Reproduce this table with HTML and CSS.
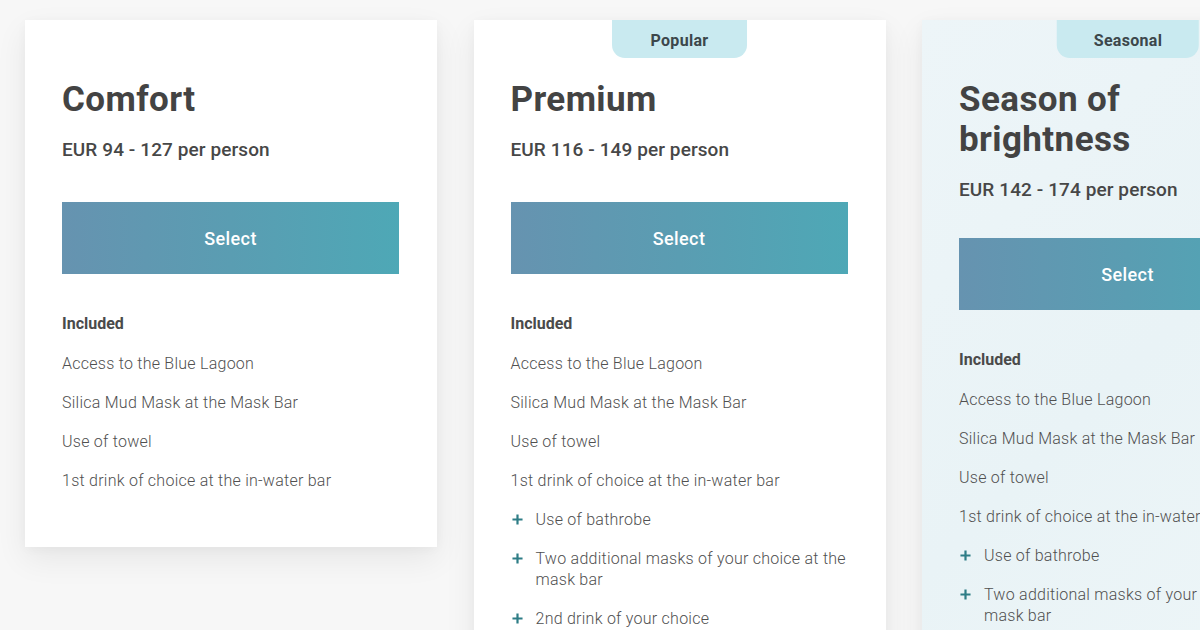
FILE: index.html
```html
<!DOCTYPE html>
<html lang="en">
<head>
<meta charset="utf-8">
<title>Packages</title>
<link rel="stylesheet" href="styles.css">
</head>
<body>
<div class="cards">
  <div class="card">
    <h2 class="title">Comfort</h2>
    <p class="price">EUR 94 - 127 per person</p>
    <button class="select">Select</button>
    <h3 class="inc">Included</h3>
    <ul class="list">
      <li>Access to the Blue Lagoon</li>
      <li>Silica Mud Mask at the Mask Bar</li>
      <li>Use of towel</li>
      <li>1st drink of choice at the in-water bar</li>
    </ul>
  </div>
  <div class="card">
    <div class="badge">Popular</div>
    <h2 class="title">Premium</h2>
    <p class="price">EUR 116 - 149 per person</p>
    <button class="select">Select</button>
    <h3 class="inc">Included</h3>
    <ul class="list">
      <li>Access to the Blue Lagoon</li>
      <li>Silica Mud Mask at the Mask Bar</li>
      <li>Use of towel</li>
      <li>1st drink of choice at the in-water bar</li>
      <li class="plus"><svg viewBox="0 0 12 12"><path d="M6 0.5v11M0.5 6h11"/></svg><span>Use of bathrobe</span></li>
      <li class="plus"><svg viewBox="0 0 12 12"><path d="M6 0.5v11M0.5 6h11"/></svg><span>Two additional masks of your choice at the mask bar</span></li>
      <li class="plus"><svg viewBox="0 0 12 12"><path d="M6 0.5v11M0.5 6h11"/></svg><span>2nd drink of your choice</span></li>
    </ul>
  </div>
  <div class="card seasonal">
    <div class="badge">Seasonal</div>
    <h2 class="title">Season of brightness</h2>
    <p class="price">EUR 142 - 174 per person</p>
    <button class="select">Select</button>
    <h3 class="inc">Included</h3>
    <ul class="list">
      <li>Access to the Blue Lagoon</li>
      <li>Silica Mud Mask at the Mask Bar</li>
      <li>Use of towel</li>
      <li>1st drink of choice at the in-water bar</li>
      <li class="plus"><svg viewBox="0 0 12 12"><path d="M6 0.5v11M0.5 6h11"/></svg><span>Use of bathrobe</span></li>
      <li class="plus"><svg viewBox="0 0 12 12"><path d="M6 0.5v11M0.5 6h11"/></svg><span>Two additional masks of your choice at the mask bar</span></li>
      <li class="plus"><svg viewBox="0 0 12 12"><path d="M6 0.5v11M0.5 6h11"/></svg><span>2nd drink of your choice</span></li>
    </ul>
  </div>
</div>
</body>
</html>
```

FILE: styles.css
```css
html, body {
  margin: 0;
  padding: 0;
  height: 630px;
  overflow: hidden;
  background: #f7f7f7;
  font-family: Roboto, "Liberation Sans", sans-serif;
  color: #444;
}

.cards {
  display: flex;
  align-items: flex-start;
  gap: 36.5px;
  padding: 20px 0 0 25px;
}

.card {
  position: relative;
  flex: 0 0 412px;
  box-sizing: border-box;
  padding: 60px 38px 56px 37px;
  background: #fff;
  box-shadow: 0 12px 30px rgba(0, 0, 0, 0.07), 0 2px 10px rgba(0, 0, 0, 0.03);
}

.card.seasonal {
  background: linear-gradient(135deg, #edf5f8 0%, #e9f3f6 50%, #eef6f8 100%);
}

.badge {
  position: absolute;
  top: 0;
  left: 50%;
  transform: translateX(-50%);
  height: 38px;
  padding: 0 39px;
  box-sizing: border-box;
  line-height: 41px;
  background: #c9eaf0;
  border-radius: 0 0 13px 13px;
  font-size: 16px;
  font-weight: 700;
  letter-spacing: 0.3px;
  color: #3c474b;
  white-space: nowrap;
}

.seasonal .badge {
  padding: 0 37px;
}

.title {
  margin: 0;
  font-size: 35px;
  line-height: 40px;
  font-weight: 700;
  letter-spacing: 0.4px;
  color: #434343;
}

.price {
  margin: 18px 0 0;
  font-size: 19px;
  line-height: 24px;
  font-weight: 500;
  letter-spacing: 0.1px;
  color: #474747;
}

.select {
  display: block;
  width: 100%;
  height: 72px;
  margin: 40px 0 0;
  border: 0;
  padding: 0;
  background: linear-gradient(90deg, #6693b0 0%, #5a9db2 50%, #4ea8b6 100%);
  color: #fff;
  font-family: inherit;
  font-size: 18px;
  font-weight: 500;
  letter-spacing: 0.4px;
}

.seasonal .select {
  margin-top: 36px;
}

.inc {
  margin: 39px 0 0;
  font-size: 16px;
  line-height: 21px;
  font-weight: 700;
  color: #4a4a4a;
}

.list {
  list-style: none;
  margin: 19px 0 0;
  padding: 0;
  display: flex;
  flex-direction: column;
  gap: 18px;
}

.list li {
  font-size: 16px;
  line-height: 21px;
  font-weight: 300;
  color: #505050;
  letter-spacing: 0.25px;
}

.list li.plus {
  display: flex;
  align-items: flex-start;
}

.list li.plus svg {
  flex: 0 0 11px;
  width: 11px;
  height: 11px;
  margin: 5px 13px 0 1px;
  stroke: #2e7d86;
  stroke-width: 2.4;
  fill: none;
}
```
